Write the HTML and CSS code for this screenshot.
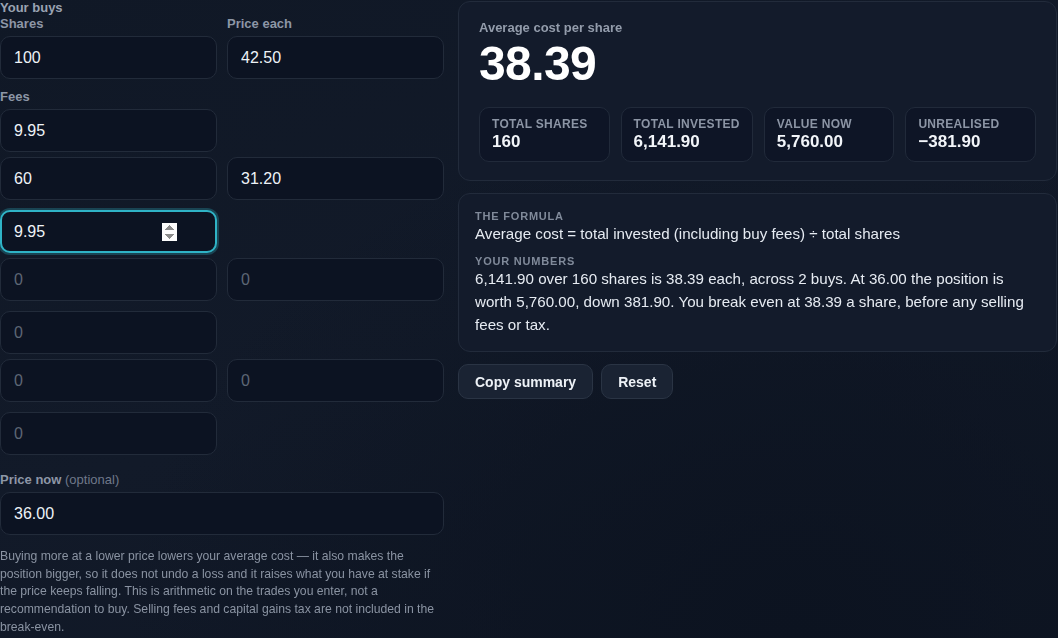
FILE: index.html
```html
<!DOCTYPE html>
<html lang="en">
<head>
  <meta charset="UTF-8">
  <meta name="viewport" content="width=device-width, initial-scale=1.0">
  <title>Average cost</title>
  <link rel="stylesheet" href="styles.css">
</head>
<body>
<div class="page">
  <div class="left">
    <div class="legend">Your buys</div>

    <div class="buys">
      <div class="buy">
        <div class="row">
          <div class="field">
            <label>Shares</label>
            <input class="inp" type="number" value="100">
          </div>
          <div class="field">
            <label>Price each</label>
            <input class="inp" type="number" value="42.50">
          </div>
        </div>
        <div class="row">
          <div class="field">
            <label>Fees</label>
            <input class="inp" type="number" value="9.95">
          </div>
        </div>
      </div>

      <div class="buy">
        <div class="row">
          <input class="inp" type="number" value="60">
          <input class="inp" type="number" value="31.20">
        </div>
        <div class="row">
          <input class="inp focus" type="number" value="9.95" autofocus>
        </div>
      </div>

      <div class="buy">
        <div class="row">
          <input class="inp" type="number" placeholder="0">
          <input class="inp" type="number" placeholder="0">
        </div>
        <div class="row">
          <input class="inp" type="number" placeholder="0">
        </div>
      </div>

      <div class="buy">
        <div class="row">
          <input class="inp" type="number" placeholder="0">
          <input class="inp" type="number" placeholder="0">
        </div>
        <div class="row">
          <input class="inp" type="number" placeholder="0">
        </div>
      </div>
    </div>

    <div class="field now">
      <label>Price now <span class="opt">(optional)</span></label>
      <input class="inp" type="number" value="36.00">
    </div>

    <p class="note">Buying more at a lower price lowers your average cost — it also makes the position bigger, so it does not undo a loss and it raises what you have at stake if the price keeps falling. This is arithmetic on the trades you enter, not a recommendation to buy. Selling fees and capital gains tax are not included in the break-even.</p>
  </div>

  <div class="right">
    <div class="card result">
      <div class="res-label">Average cost per share</div>
      <div class="big">38.39</div>
      <div class="stats">
        <div class="stat">
          <div class="stat-label">Total shares</div>
          <div class="stat-val">160</div>
        </div>
        <div class="stat">
          <div class="stat-label">Total invested</div>
          <div class="stat-val">6,141.90</div>
        </div>
        <div class="stat">
          <div class="stat-label">Value now</div>
          <div class="stat-val">5,760.00</div>
        </div>
        <div class="stat">
          <div class="stat-label">Unrealised</div>
          <div class="stat-val">−381.90</div>
        </div>
      </div>
    </div>

    <div class="card explain">
      <div class="ex-label">The formula</div>
      <div class="ex-text">Average cost = total invested (including buy fees) ÷ total shares</div>
      <div class="ex-label second">Your numbers</div>
      <div class="ex-text para">6,141.90 over 160 shares is 38.39 each, across 2 buys. At 36.00 the position is worth 5,760.00, down 381.90. You break even at 38.39 a share, before any selling fees or tax.</div>
    </div>

    <div class="actions">
      <button class="btn">Copy summary</button>
      <button class="btn">Reset</button>
    </div>
  </div>
</div>
</body>
</html>
```

FILE: styles.css
```css
html, body {
  margin: 0;
  height: 100%;
}

body {
  font-family: "Liberation Sans", Arial, sans-serif;
  color: #e8edf4;
  background: radial-gradient(ellipse at 75% 100%, #0c1320 0%, transparent 60%),
              linear-gradient(160deg, #101826 0%, #121a29 50%, #0f1624 100%);
  overflow: hidden;
}

.page {
  display: grid;
  grid-template-columns: 444px 599px;
  gap: 14px;
  align-items: start;
}

/* left side */

.legend {
  font-size: 13px;
  font-weight: bold;
  color: #9aa3b2;
  line-height: 16px;
}

.buys {
  display: flex;
  flex-direction: column;
  gap: 5px;
}

.buy {
  display: flex;
  flex-direction: column;
  gap: 10px;
}

.row {
  display: grid;
  grid-template-columns: 1fr 1fr;
  gap: 10px;
}

.field {
  display: flex;
  flex-direction: column;
}

.field label {
  font-size: 13px;
  font-weight: bold;
  color: #8d96a6;
  line-height: 15px;
  margin-bottom: 5px;
}

.inp {
  box-sizing: border-box;
  width: 100%;
  height: 43px;
  padding: 0 38px 0 13px;
  background: #0c1322;
  border: 1px solid #222b3a;
  border-radius: 10px;
  color: #eef2f7;
  font-family: "Liberation Sans", Arial, sans-serif;
  font-size: 16px;
  outline: none;
}

.inp::placeholder {
  color: #5d6675;
}

.inp.focus {
  border: 2px solid #2fb3c6;
  padding-left: 12px;
  box-shadow: 0 0 0 2px rgba(47, 179, 198, 0.28);
}

.now {
  margin-top: 17px;
}

.opt {
  font-weight: normal;
  color: #6f7889;
}

.now .inp {
  padding-right: 13px;
}

.note {
  margin: 13px 0 0;
  font-size: 12.2px;
  line-height: 17.7px;
  color: #8a93a2;
}

/* right side */

.right {
  display: flex;
  flex-direction: column;
  gap: 12px;
  padding-top: 1px;
}

.card {
  background: #131b2b;
  border: 1px solid #222b3b;
  border-radius: 12px;
}

.result {
  padding: 18px 20px 18px;
}

.res-label {
  font-size: 13px;
  font-weight: bold;
  color: #939cab;
  line-height: 15px;
}

.big {
  font-size: 48px;
  font-weight: bold;
  color: #fff;
  letter-spacing: -0.6px;
  line-height: 56px;
  margin: 1px 0 15px;
}

.stats {
  display: grid;
  grid-template-columns: repeat(4, 1fr);
  gap: 11px;
}

.stat {
  background: #0e1526;
  border: 1px solid #212a3a;
  border-radius: 10px;
  padding: 9px 12px 9px;
}

.stat-label {
  font-size: 12px;
  font-weight: bold;
  text-transform: uppercase;
  letter-spacing: 0.3px;
  color: #8c95a5;
  line-height: 15px;
  white-space: nowrap;
}

.stat-val {
  font-size: 17px;
  font-weight: bold;
  color: #f2f5f9;
  line-height: 20px;
}

.explain {
  padding: 16px 20px 15px 16px;
}

.ex-label {
  font-size: 11px;
  font-weight: bold;
  text-transform: uppercase;
  letter-spacing: 0.8px;
  color: #808a9a;
  line-height: 13px;
}

.ex-label.second {
  margin-top: 10px;
  margin-bottom: -1px;
}

.ex-text {
  font-size: 15.15px;
  color: #e6ebf2;
  line-height: 22px;
}

.ex-text.para {
  line-height: 23px;
}

.actions {
  display: flex;
  gap: 8px;
}

.btn {
  height: 35px;
  padding: 0 16px;
  background: #1a2333;
  border: 1px solid #2a3444;
  border-radius: 10px;
  color: #eef2f7;
  font-family: "Liberation Sans", Arial, sans-serif;
  font-size: 14px;
  font-weight: bold;
}
```
